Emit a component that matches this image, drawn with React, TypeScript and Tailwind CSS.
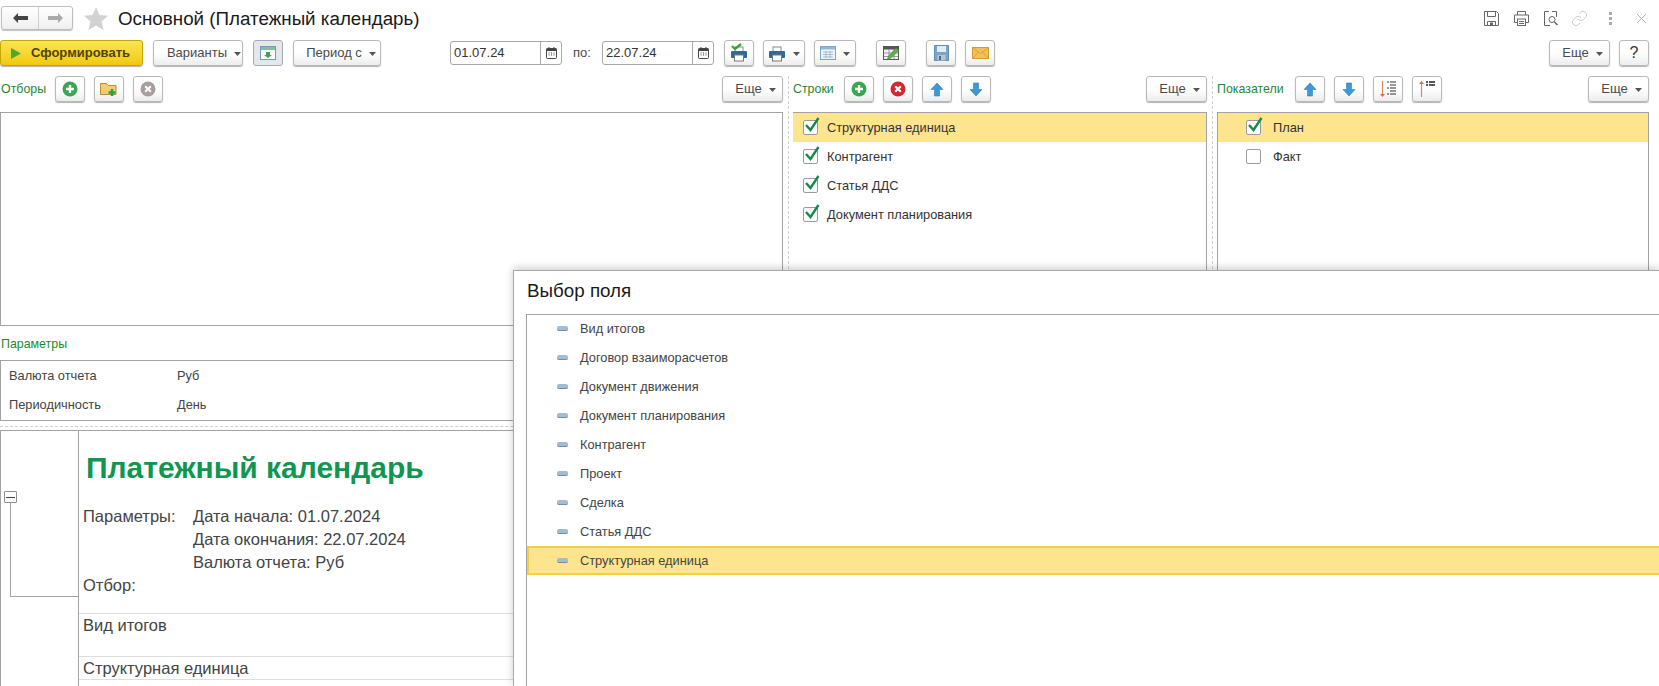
import type { ReactNode } from 'react';
import { Link } from 'lucide-react';

const FONT = "font-['Liberation_Sans',Arial,sans-serif]";

const stringRows = ['Структурная единица', 'Контрагент', 'Статья ДДС', 'Документ планирования'];
const fieldRows = [
  'Вид итогов',
  'Договор взаиморасчетов',
  'Документ движения',
  'Документ планирования',
  'Контрагент',
  'Проект',
  'Сделка',
  'Статья ДДС',
  'Структурная единица',
];

function Btn({ className = '', pressed = false, children }: { className?: string; pressed?: boolean; children?: ReactNode }) {
  const look = pressed
    ? 'border-[#a4abb0] bg-[#e4e8eb]'
    : 'border-[#b9b9b9] bg-linear-to-b from-white via-white to-[#ececec] shadow-[0_1px_1px_rgba(0,0,0,0.3)]';
  return (
    <button className={`h-[26px] shrink-0 flex items-center justify-center rounded-[3px] border ${look} ${className}`}>
      {children}
    </button>
  );
}

function Caret() {
  return (
    <svg width="7" height="4" viewBox="0 0 7 4" className="ml-[7px] mt-[1px]">
      <path d="M0 0h7L3.5 4z" fill="#555" />
    </svg>
  );
}

function More({ className = '' }: { className?: string }) {
  return (
    <Btn className={`w-[61px] pl-[6px] ${className}`}>
      Еще
      <Caret />
    </Btn>
  );
}

function Circle({ color, kind }: { color: string; kind: 'plus' | 'x' }) {
  return (
    <svg width="16" height="16" viewBox="0 0 16 16">
      <circle cx="8" cy="8" r="7.5" fill={color} />
      {kind === 'plus' ? (
        <path d="M8 4v8M4 8h8" stroke="#fff" strokeWidth="2.4" />
      ) : (
        <path d="M5.2 5.2l5.6 5.6M10.8 5.2l-5.6 5.6" stroke="#fff" strokeWidth="2.2" />
      )}
    </svg>
  );
}

function Arrow({ down = false }: { down?: boolean }) {
  return (
    <svg width="14" height="15" viewBox="0 0 14 15">
      <path
        d={down ? 'M4.5 1h5v6.5H13L7 14 1 7.5h3.5z' : 'M7 1l6 6.5H9.5V14h-5V7.5H1z'}
        fill="#3d98d6"
        stroke="#2f7fb8"
        strokeWidth="0.6"
      />
    </svg>
  );
}

function SortIcon({ up = false }: { up?: boolean }) {
  return (
    <svg width="20" height="18" viewBox="0 0 20 18">
      {up ? (
        <>
          <path d="M4.5 17V3" stroke="#d98a5c" strokeWidth="1.2" />
          <path d="M2 4l2.5-3L7 4z" fill="#d9703c" />
          <path d="M9 2h2M12 2h6M9 5h2M12 5h6" stroke="#222" strokeWidth="1.4" />
        </>
      ) : (
        <>
          <path d="M4.5 1v14" stroke="#d98a5c" strokeWidth="1.2" />
          <path d="M2 14l2.5 3L7 14z" fill="#d9703c" />
          <path d="M9 2h2M12 2h6M12 5h6M9 8h2M12 8h6M12 11h6M9 14h2M12 14h6" stroke="#333" strokeWidth="1.2" />
        </>
      )}
    </svg>
  );
}

function PrinterColor({ check = false }: { check?: boolean }) {
  return (
    <svg width="18" height="20" viewBox="0 0 18 20">
      <rect x="5" y="4" width="8" height="5" fill="#fff" stroke="#8a8a8a" />
      <rect x="1" y="8" width="16" height="7" rx="1" fill="#2f6b99" />
      <rect x="4.5" y="12" width="9" height="6" fill="#fff" stroke="#777" />
      {check && <path d="M2 3l3 3 6-5" fill="none" stroke="#3aa63a" strokeWidth="2.4" />}
    </svg>
  );
}

function Calendar() {
  return (
    <svg width="11" height="12" viewBox="0 0 11 12">
      <rect x="0.5" y="1.5" width="10" height="10" rx="1" fill="#fff" stroke="#444" />
      <rect x="0.5" y="1.5" width="10" height="2.5" fill="#444" />
      <path d="M3 0v2M8 0v2" stroke="#444" />
      <path d="M2.5 6h1M5 6h1M7.5 6h1M2.5 8h1M5 8h1M7.5 8h1" stroke="#444" />
    </svg>
  );
}

function DateInput({ value }: { value: string }) {
  return (
    <div className="h-[24px] w-[112px] shrink-0 flex rounded-[3px] border border-[#a8a8a8] bg-white text-[#333]">
      <div className="flex-1 pl-[3px] leading-[22px]">{value}</div>
      <div className="w-[21px] border-l border-[#a8a8a8] flex items-center justify-center">
        <Calendar />
      </div>
    </div>
  );
}

function Check({ checked = true }: { checked?: boolean }) {
  return (
    <div className="relative w-[15px] h-[15px] shrink-0 rounded-[2px] border border-[#9a9a9a] bg-white">
      {checked && (
        <svg width="16" height="16" viewBox="0 0 16 16" className="absolute left-0 top-[-4px]">
          <path d="M2 8l4.500 5L14.500 1" fill="none" stroke="#16894a" strokeWidth="2.4" />
        </svg>
      )}
    </div>
  );
}

function Dash() {
  return <div className="w-[11px] h-[5px] rounded-[2px] bg-[#a3bccf] border-b border-[#6f8ea6] shrink-0" />;
}

function Label({ children, className = '' }: { children: ReactNode; className?: string }) {
  return <span className={`text-[12.4px] text-[#1f8a2c] ${className}`}>{children}</span>;
}

function VDash() {
  return (
    <div className="w-[10px] shrink-0 flex justify-center">
      <div className="h-full border-l border-dashed border-[#cfcfcf]" />
    </div>
  );
}

function WindowIcons() {
  return (
    <div className="ml-auto flex items-center gap-[15px] pr-[12px]">
      <svg width="15" height="15" viewBox="0 0 15 15" fill="none" stroke="#666">
        <path d="M.5.5h12l2 2v12H.5z" />
        <path d="M3.5.5v5h8v-5M3.5 14.5v-4h8v4" />
        <rect x="6" y="11.5" width="3" height="3" fill="#666" stroke="none" />
      </svg>
      <svg width="15" height="15" viewBox="0 0 15 15" fill="none" stroke="#666">
        <path d="M3.5 4V.5h8V4M.5 4h14v7.5h-3M3.5 11.5h-3V4" />
        <rect x="3.5" y="8" width="8" height="6.5" />
        <path d="M5 10.5h5M5 12.5h5" />
      </svg>
      <svg width="15" height="15" viewBox="0 0 15 15" fill="none" stroke="#666">
        <path d="M5 .5H.5v14H6M8 .5h4.5V6" />
        <circle cx="8" cy="8.5" r="3" />
        <path d="M10.5 11l3 3" strokeWidth="1.6" />
      </svg>
      <Link size={17} strokeWidth={1} color="#b5b5b5" className="-ml-[3px]" />
      <div className="flex flex-col gap-[2px] w-[14px] items-center">
        <i className="w-[3px] h-[3px] bg-[#aaa]" />
        <i className="w-[3px] h-[3px] bg-[#aaa]" />
        <i className="w-[3px] h-[3px] bg-[#aaa]" />
      </div>
      <svg width="11" height="11" viewBox="0 0 11 11" className="ml-[4px]">
        <path d="M1 1l9 9M10 1l-9 9" stroke="#aaa" strokeWidth="0.9" />
      </svg>
    </div>
  );
}

export default function App() {
  return (
    <div className={`relative w-[1659px] h-[686px] overflow-hidden bg-white text-[13px] text-[#4a4a4a] ${FONT}`}>
      {/* Заголовок */}
      <div className="h-[40px] pt-[6px] flex items-start">
        <div className="ml-[1px] w-[72px] h-[24px] flex rounded-[3px] border border-[#bdbdbd] bg-linear-to-b from-white to-[#efefef] shadow-[0_1px_1px_rgba(0,0,0,0.25)]">
          <div className="w-[37px] border-r border-[#d0d0d0] flex items-center justify-center">
            <svg width="15" height="10" viewBox="0 0 15 10"><path d="M0 5l5-5v3h10v4H5v3z" fill="#444" /></svg>
          </div>
          <div className="flex-1 flex items-center justify-center">
            <svg width="15" height="10" viewBox="0 0 15 10"><path d="M15 5l-5-5v3H0v4h10v3z" fill="#a9a9a9" /></svg>
          </div>
        </div>
        <svg width="24" height="23" viewBox="0 0 24 23" className="ml-[11px] mt-[1px]">
          <path d="M12 0l3.4 8 8.6.7-6.5 5.7 2 8.6L12 18.4 4.500 23l2-8.600L0 8.700 8.600 8z" fill="#d2d2d2" />
        </svg>
        <h1 className="ml-[10px] text-[18.8px] leading-[26px] font-normal text-[#1a1a1a]">Основной (Платежный календарь)</h1>
        <div className="ml-auto h-[24px] flex flex-1 items-center"><WindowIcons /></div>
      </div>

      {/* Командная панель */}
      <div className="h-[26px] flex items-center pr-[10px]">
        <button className="w-[143px] h-[26px] shrink-0 flex items-center rounded-[3px] border border-[#c7a707] bg-linear-to-b from-[#fbe54f] to-[#f0c900] shadow-[0_1px_1px_rgba(0,0,0,0.3)] font-bold text-[#4f4400]">
          <svg width="10" height="11" viewBox="0 0 10 11" className="ml-[10px] mr-[10px]"><path d="M0 0l10 5.500L0 11z" fill="#4fa92c" /></svg>
          Сформировать
        </button>
        <Btn className="ml-[10px] w-[90px] pl-[12px]">Варианты<Caret /></Btn>
        <Btn pressed className="ml-[10px] w-[30px]">
          <svg width="16" height="14" viewBox="0 0 16 14">
            <rect x="0.500" y="0.500" width="15" height="13" fill="#fff" stroke="#6f9bc0" />
            <rect x="1" y="1" width="14" height="3" fill="#7cc4a0" />
            <path d="M6 6h4v3h2l-4 3-4-3h2z" fill="#3aa35a" />
          </svg>
        </Btn>
        <Btn className="ml-[10px] w-[88px] pl-[8px]">Период с<Caret /></Btn>

        <div className="ml-[69px]"><DateInput value="01.07.24" /></div>
        <span className="ml-[11px] w-[29px]">по:</span>
        <DateInput value="22.07.24" />

        <Btn className="ml-[10px] w-[30px]"><PrinterColor check /></Btn>
        <Btn className="ml-[9px] w-[42px]"><PrinterColor /><Caret /></Btn>
        <Btn className="ml-[9px] w-[42px]">
          <svg width="16" height="14" viewBox="0 0 16 14">
            <rect x="0.500" y="0.500" width="15" height="13" fill="#eef4fa" stroke="#7ba4c9" />
            <rect x="1" y="1" width="14" height="2.500" fill="#8fb8dc" />
            <path d="M3 6h10M3 8.500h10M3 11h10M6 5v7M10 5v7" stroke="#8fb0cc" strokeWidth="0.8" />
          </svg>
          <Caret />
        </Btn>
        <Btn className="ml-[20px] w-[30px]">
          <svg width="17" height="16" viewBox="0 0 17 16">
            <rect x="0.500" y="1.500" width="15" height="13" fill="#f2f2f2" stroke="#555" />
            <rect x="1" y="2" width="14" height="2.500" fill="#555" />
            <path d="M1 8h14M1 11.500h14M6 4v10M11 4v10" stroke="#888" strokeWidth="0.8" />
            <path d="M4 15l1.500-4L13 3l3 2.500L8 13z" fill="#63ad55" stroke="#3f7f36" strokeWidth="0.5" />
          </svg>
        </Btn>
        <Btn className="ml-[20px] w-[30px]">
          <svg width="15" height="16" viewBox="0 0 15 16">
            <path d="M.5.500h14v15H.5z" fill="#7ba5c8" stroke="#5f8db3" />
            <rect x="3" y="1" width="9" height="6" fill="#e2edf6" />
            <rect x="3.500" y="10" width="8" height="5.500" fill="#b7c5d1" />
            <rect x="5" y="11" width="2" height="4" fill="#4d6a82" />
          </svg>
        </Btn>
        <Btn className="ml-[9px] w-[30px]">
          <svg width="17" height="12" viewBox="0 0 17 12">
            <rect x="0.500" y="0.500" width="16" height="11" fill="#f3bf58" stroke="#d69a36" />
            <path d="M.5.500l8 6 8-6M.5 11.500l6-6.500M16.500 11.500l-6-6.500" fill="none" stroke="#d69a36" strokeWidth="0.8" />
          </svg>
        </Btn>
        <More className="ml-auto" />
        <Btn className="ml-[9px] w-[30px] text-[16px] text-[#333]">?</Btn>
      </div>

      {/* Отборы, строки, показатели */}
      <div className="mt-[10px] h-[348px] flex pr-[10px]">
        <div className="w-[783px] shrink-0 flex flex-col">
          <div className="h-[26px] flex items-center">
            <Label className="ml-[1px] w-[54px]">Отборы</Label>
            <Btn className="w-[30px]"><Circle color="#37a84e" kind="plus" /></Btn>
            <Btn className="ml-[9px] w-[30px]">
              <svg width="18" height="16" viewBox="0 0 18 16">
                <path d="M.500 2.500h6l1.500 2h8v9H.5z" fill="#f2cd72" stroke="#b98d33" />
                <path d="M12 8v7M8.500 11.500h7" stroke="#2d9e3f" strokeWidth="2.400" />
              </svg>
            </Btn>
            <Btn className="ml-[9px] w-[30px]"><Circle color="#a89e9e" kind="x" /></Btn>
            <More className="ml-auto" />
          </div>
          <div className="mt-[10px] h-[214px] border border-[#a3a3a3] bg-white" />
          <div className="h-[34px] flex items-center pl-[1px] pt-[2px]"><Label>Параметры</Label></div>
          <div className="h-[61px] border border-[#a3a3a3] bg-white text-[12.8px] text-[#444]">
            <div className="h-[29px] flex items-center pl-[8px]"><span className="w-[168px]">Валюта отчета</span>Руб</div>
            <div className="h-[29px] flex items-center pl-[8px]"><span className="w-[168px]">Периодичность</span>День</div>
          </div>
        </div>

        <VDash />

        <div className="w-[414px] shrink-0 flex flex-col">
          <div className="h-[26px] flex items-center">
            <Label className="w-[51px]">Строки</Label>
            <Btn className="w-[30px]"><Circle color="#37a84e" kind="plus" /></Btn>
            <Btn className="ml-[9px] w-[30px]"><Circle color="#d0282e" kind="x" /></Btn>
            <Btn className="ml-[9px] w-[30px]"><Arrow /></Btn>
            <Btn className="ml-[9px] w-[30px]"><Arrow down /></Btn>
            <More className="ml-auto" />
          </div>
          <div className="mt-[10px] flex-1 border border-[#a3a3a3] border-l-0 bg-white text-[12.8px] text-[#333]">
            {stringRows.map((r, i) => (
              <div key={r} className={`h-[29px] flex items-center pl-[10px] gap-[9px] ${i === 0 ? 'bg-[#fde58f]' : ''}`}>
                <Check />
                {r}
              </div>
            ))}
          </div>
        </div>

        <VDash />

        <div className="flex-1 flex flex-col">
          <div className="h-[26px] flex items-center">
            <Label className="w-[78px]">Показатели</Label>
            <Btn className="w-[30px]"><Arrow /></Btn>
            <Btn className="ml-[9px] w-[30px]"><Arrow down /></Btn>
            <Btn className="ml-[9px] w-[30px]"><SortIcon /></Btn>
            <Btn className="ml-[9px] w-[30px]"><SortIcon up /></Btn>
            <More className="ml-auto" />
          </div>
          <div className="mt-[10px] flex-1 border border-[#a3a3a3] bg-white text-[12.8px] text-[#333]">
            <div className="h-[29px] flex items-center pl-[28px] gap-[12px] bg-[#fde58f]"><Check />План</div>
            <div className="h-[29px] flex items-center pl-[28px] gap-[12px]"><Check checked={false} />Факт</div>
          </div>
        </div>
      </div>

      {/* Разделитель и отчет */}
      <div className="mt-[2px] border-t border-dashed border-[#d0d0d0]" />
      <div className="mt-[3px] h-[300px] flex border-t border-l border-[#a3a3a3]">
        <div className="relative w-[78px] shrink-0 border-r border-[#a3a3a3]">
          <div className="absolute left-[3px] top-[60px] w-[13px] h-[12px] rounded-[1px] border border-[#8e8e8e] flex items-center justify-center bg-white">
            <div className="w-[9px] h-px bg-[#444]" />
          </div>
          <div className="absolute left-[9px] top-[72px] w-[68px] h-[94px] border-l border-b border-[#a3a3a3]" />
        </div>
        <div className="flex-1 text-[16.5px] leading-[23px] text-[#444]">
          <div className="h-[182px] pl-[8px]">
            <div className="pt-[18px] h-[74px] text-[30px] leading-[38px] font-bold text-[#0f9650] -ml-[1px]">Платежный календарь</div>
            <div className="flex"><span className="w-[106px] -ml-[4px] mr-[4px]">Параметры:</span><span>Дата начала: 01.07.2024</span></div>
            <div className="pl-[106px]">Дата окончания: 22.07.2024</div>
            <div className="pl-[106px]">Валюта отчета: Руб</div>
            <div className="-ml-[4px]">Отбор:</div>
          </div>
          <div className="h-[43px] pl-[4px] border-t border-[#dedede]">Вид итогов</div>
          <div className="h-[23px] pl-[4px] border-t border-[#dedede]">Структурная единица</div>
          <div className="border-t border-[#dedede]" />
        </div>
      </div>

      {/* Выбор поля */}
      <div className="absolute left-[513px] top-[270px] right-0 bottom-0 bg-white border-t border-l border-[#a8a8a8] shadow-[0_-2px_8px_rgba(0,0,0,0.2)] flex flex-col">
        <div className="h-[41px] mb-[2px] pl-[13px] flex items-center text-[18.8px] text-[#1a1a1a]">Выбор поля</div>
        <div className="flex-1 ml-[12px] border-t border-l border-[#a3a3a3] text-[12.8px] text-[#444]">
          <div className="-mt-px">
            {fieldRows.map((r, i) => (
              <div
                key={r}
                className={i === fieldRows.length - 1
                  ? 'h-[29px] flex items-center pl-[28px] gap-[12px] bg-[#fde58f] border-2 border-r-0 border-[#f4cf3f]'
                  : 'h-[29px] flex items-center pl-[30px] gap-[12px]'}
              >
                <Dash />
                {r}
              </div>
            ))}
          </div>
        </div>
      </div>
    </div>
  );
}
